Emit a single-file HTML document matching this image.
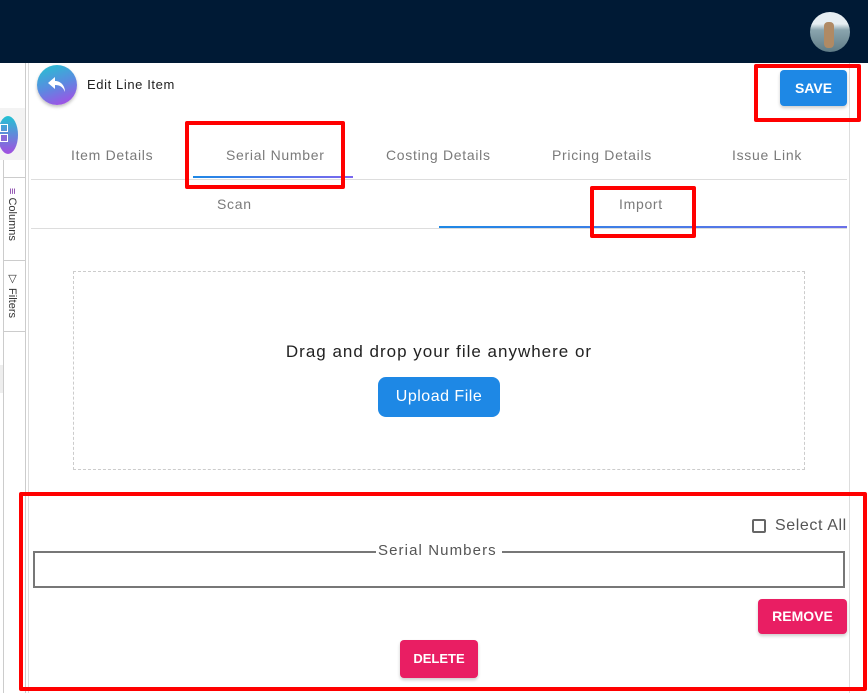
<!DOCTYPE html>
<html><head><style>
*{margin:0;padding:0;box-sizing:border-box}
body{width:868px;height:693px;position:relative;overflow:hidden;background:#fff;font-family:"Liberation Sans",sans-serif;}
.a{position:absolute}
.red{position:absolute;border:4px solid #f00;border-radius:2px}
.tab{position:absolute;font-size:14px;color:#7a7a7a;top:147px;letter-spacing:.7px}
.btn{position:absolute;color:#fff;font-weight:bold;text-align:center;border-radius:4px;box-shadow:0 2px 3px rgba(0,0,0,.2)}
</style></head><body>
<div class="a" style="left:0;top:0;width:868px;height:63px;background:#001a35"></div>
<div class="a" style="left:810px;top:12px;width:40px;height:40px;border-radius:50%;background:linear-gradient(#e6eef2 0 30%,#8aa5ae 45%,#5f7b86);overflow:hidden"><div class="a" style="left:14px;top:10px;width:10px;height:26px;background:#b08a64;border-radius:4px"></div></div>
<!-- left sidebar -->
<div class="a" style="left:25px;top:63px;width:1px;height:630px;background:#ccc"></div>
<div class="a" style="left:28px;top:63px;width:1px;height:630px;background:#ddd"></div>
<div class="a" style="left:0;top:108px;width:25px;height:52px;background:#f3f3f3"></div>
<div class="a" style="left:-2px;top:116px;width:20px;height:38px;border-radius:50%;background:linear-gradient(#22c3d3,#a34ee0)"></div>
<div class="a" style="left:0;top:124px;width:8px;height:8px;border:1.5px solid #fff"></div>
<div class="a" style="left:0;top:134px;width:8px;height:8px;border:1.5px solid #fff;background:#8a6ad8"></div>
<div class="a" style="left:3px;top:160px;width:1px;height:533px;background:#ccc"></div>
<div class="a" style="left:3px;top:177px;width:22px;height:1px;background:#ccc"></div>
<div class="a" style="left:3px;top:260px;width:22px;height:1px;background:#ccc"></div>
<div class="a" style="left:3px;top:331px;width:22px;height:1px;background:#ccc"></div>
<div class="a" style="left:0;top:365px;width:3px;height:28px;background:#eee"></div>
<div class="a" style="left:6px;top:188px;font-size:11px;color:#333;writing-mode:vertical-rl"><span style="color:#7a2fa0">≡</span> Columns</div>
<div class="a" style="left:6px;top:272px;font-size:11px;color:#333;writing-mode:vertical-rl">▽ Filters</div>
<div class="a" style="left:849px;top:63px;width:1px;height:630px;background:#ddd"></div>
<!-- header -->
<div class="a" style="left:37px;top:65px;width:40px;height:40px;border-radius:50%;background:linear-gradient(160deg,#23c5d0,#5a8be0 50%,#b044e6);box-shadow:0 2px 3px rgba(0,0,0,.25)"></div>
<svg class="a" style="left:47px;top:76px" width="20" height="18" viewBox="0 0 20 18"><path d="M8 1 L1 7 L8 13 V9 C13 9 16 11 18 16 C18 10 14 5 8 5 Z" fill="#fff"/></svg>
<div class="a" style="left:87px;top:77px;font-size:13px;color:#222;letter-spacing:.6px">Edit Line Item</div>
<div class="btn" style="left:780px;top:70px;width:67px;height:36px;background:#1e88e5;line-height:36px;font-size:14px">SAVE</div>
<!-- tabs -->
<div class="tab" style="left:71px">Item Details</div>
<div class="tab" style="left:226px">Serial Number</div>
<div class="tab" style="left:386px">Costing Details</div>
<div class="tab" style="left:552px">Pricing Details</div>
<div class="tab" style="left:732px">Issue Link</div>
<div class="a" style="left:31px;top:179px;width:816px;height:1px;background:#ddd"></div>
<div class="a" style="left:193px;top:176px;width:160px;height:2px;background:linear-gradient(90deg,#1e88e5,#7b68ee)"></div>
<div class="tab" style="left:217px;top:196px">Scan</div>
<div class="tab" style="left:619px;top:196px">Import</div>
<div class="a" style="left:31px;top:228px;width:816px;height:1px;background:#ddd"></div>
<div class="a" style="left:439px;top:226px;width:408px;height:2px;background:linear-gradient(90deg,#1e88e5,#6a70e8)"></div>
<!-- dropzone -->
<div class="a" style="left:73px;top:271px;width:732px;height:199px;border:1px dashed #ccc"></div>
<div class="a" style="left:73px;top:342px;width:732px;text-align:center;font-size:17px;color:#222;letter-spacing:1px">Drag and drop your file anywhere or</div>
<div class="btn" style="left:378px;top:377px;width:122px;height:40px;background:#1e88e5;line-height:40px;font-size:16px;font-weight:normal;border-radius:8px;box-shadow:none;letter-spacing:.5px">Upload File</div>
<!-- serial numbers -->
<div class="a" style="left:752px;top:519px;width:14px;height:14px;border:2px solid #666;border-radius:2px"></div>
<div class="a" style="left:775px;top:517px;font-size:16px;color:#555;letter-spacing:.6px">Select All</div>
<div class="a" style="left:33px;top:551px;width:812px;height:37px;border:2px solid #777;border-top:none"></div>
<div class="a" style="left:33px;top:551px;width:343px;height:2px;background:#777"></div>
<div class="a" style="left:502px;top:551px;width:343px;height:2px;background:#777"></div>
<div class="a" style="left:378px;top:542px;font-size:15px;color:#555;letter-spacing:1.1px">Serial Numbers</div>
<div class="btn" style="left:758px;top:599px;width:89px;height:35px;background:#e91e63;line-height:35px;font-size:14px">REMOVE</div>
<div class="btn" style="left:400px;top:640px;width:78px;height:38px;background:#e91e63;line-height:38px;font-size:13px">DELETE</div>
<!-- red boxes -->
<div class="red" style="left:185px;top:121px;width:160px;height:68px"></div>
<div class="red" style="left:754px;top:64px;width:107px;height:58px"></div>
<div class="red" style="left:590px;top:186px;width:106px;height:52px"></div>
<div class="red" style="left:19px;top:492px;width:848px;height:199px"></div>
</body></html>
